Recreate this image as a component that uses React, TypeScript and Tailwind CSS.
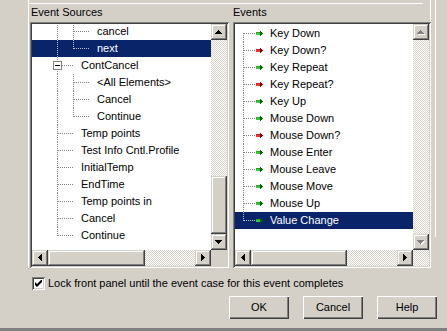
import type { ReactNode } from 'react'

const SUNKEN =
  'shadow-[inset_1px_1px_0_#808080,inset_-1px_-1px_0_#ffffff,inset_2px_2px_0_#404040,inset_-2px_-2px_0_#d4d0c8]'
const RAISED =
  'shadow-[inset_-1px_-1px_0_#404040,inset_1px_1px_0_#d4d0c8,inset_-2px_-2px_0_#808080,inset_2px_2px_0_#ffffff]'
const HATCH = 'bg-[repeating-conic-gradient(#d4d0c8_0%_25%,#ffffff_0%_50%)] bg-size-[2px_2px]'

type Dir = 'up' | 'down' | 'left' | 'right'

const ARROWS: Record<Dir, { w: number; h: number; d: string }> = {
  up: { w: 7, h: 4, d: 'M3 0h1v1h1v1h1v1h1v1H0V3h1V2h1V1h1z' },
  down: { w: 7, h: 4, d: 'M0 0h7v1H6v1H5v1H4v1H3V3H2V2H1V1H0z' },
  left: { w: 4, h: 7, d: 'M3 0h1v7H3V6H2V5H1V4H0V3h1V2h1V1h1z' },
  right: { w: 4, h: 7, d: 'M0 0h1v1h1v1h1v1h1v1H3v1H2v1H1v1H0z' },
}

function ScrollButton({ dir, disabled }: { dir: Dir; disabled?: boolean }) {
  const a = ARROWS[dir]
  return (
    <div className={`w-[16px] h-[16px] shrink-0 bg-[#d4d0c8] flex items-center justify-center ${RAISED}`}>
      <svg width={a.w + 1} height={a.h + 1} shapeRendering="crispEdges" className="block">
        {disabled && <path d={a.d} fill="#ffffff" transform="translate(1 1)" />}
        <path d={a.d} fill={disabled ? '#808080' : '#000000'} />
      </svg>
    </div>
  )
}

// small arrow glyph used in the Events list
function EventArrow({ ok }: { ok: boolean }) {
  const body = ok ? '#2ecc2e' : '#ff2a2a'
  const head = ok ? '#006400' : '#8b0000'
  return (
    <g shapeRendering="crispEdges">
      <rect x={21} y={7} width={4} height={3} fill={body} />
      <rect x={21} y={7} width={4} height={1} fill={head} opacity={0.35} />
      <rect x={25} y={6} width={1} height={5} fill={head} />
      <rect x={26} y={7} width={1} height={3} fill={head} />
      <rect x={27} y={8} width={1} height={1} fill={head} />
    </g>
  )
}

function Dots({ x1, y1, x2, y2, light }: { x1: number; y1: number; x2: number; y2: number; light?: boolean }) {
  return (
    <line
      x1={x1}
      y1={y1}
      x2={x2}
      y2={y2}
      stroke={light ? '#c0c0c0' : '#808080'}
      strokeDasharray="1 1"
      shapeRendering="crispEdges"
    />
  )
}

type SourceKind = 'l2' | 'l2last' | 'parent' | 'l1' | 'l1last'

const sources: { text: string; kind: SourceKind; selected?: boolean }[] = [
  { text: 'cancel', kind: 'l2' },
  { text: 'next', kind: 'l2last', selected: true },
  { text: 'ContCancel', kind: 'parent' },
  { text: '<All Elements>', kind: 'l2' },
  { text: 'Cancel', kind: 'l2' },
  { text: 'Continue', kind: 'l2last' },
  { text: 'Temp points', kind: 'l1' },
  { text: 'Test Info Cntl.Profile', kind: 'l1' },
  { text: 'InitialTemp', kind: 'l1' },
  { text: 'EndTime', kind: 'l1' },
  { text: 'Temp points in', kind: 'l1' },
  { text: 'Cancel', kind: 'l1' },
  { text: 'Continue', kind: 'l1last' },
]

const events: { text: string; ok: boolean; selected?: boolean }[] = [
  { text: 'Key Down', ok: true },
  { text: 'Key Down?', ok: false },
  { text: 'Key Repeat', ok: true },
  { text: 'Key Repeat?', ok: false },
  { text: 'Key Up', ok: true },
  { text: 'Mouse Down', ok: true },
  { text: 'Mouse Down?', ok: false },
  { text: 'Mouse Enter', ok: true },
  { text: 'Mouse Leave', ok: true },
  { text: 'Mouse Move', ok: true },
  { text: 'Mouse Up', ok: true },
  { text: 'Value Change', ok: true, selected: true },
]

function SourceRow({ text, kind, selected }: { text: string; kind: SourceKind; selected?: boolean }) {
  const isL2 = kind === 'l2' || kind === 'l2last'
  const indent = isL2 ? 65 : 49
  return (
    <div className={`flex h-[17px] shrink-0 items-center ${selected ? 'bg-[#0a246a] text-white' : ''}`}>
      <svg width={indent} height={17} className="block shrink-0">
        <Dots x1={25.5} y1={0} x2={25.5} y2={kind === 'l1last' ? 9 : 17} light={selected} />
        {kind === 'l2' && <Dots x1={41.5} y1={0} x2={41.5} y2={17} light={selected} />}
        {kind === 'l2last' && <Dots x1={41.5} y1={0} x2={41.5} y2={9} light={selected} />}
        {isL2 && <Dots x1={42} y1={8.5} x2={57} y2={8.5} light={selected} />}
        {(kind === 'l1' || kind === 'l1last') && <Dots x1={26} y1={8.5} x2={41} y2={8.5} light={selected} />}
        {kind === 'parent' && (
          <g shapeRendering="crispEdges">
            <Dots x1={30} y1={8.5} x2={41} y2={8.5} />
            <rect x={21.5} y={4.5} width={8} height={8} fill="#ffffff" stroke="#808080" />
            <rect x={23} y={8} width={5} height={1} fill="#000000" />
          </g>
        )}
      </svg>
      <span className="whitespace-nowrap leading-[17px]">{text}</span>
    </div>
  )
}

function EventRow({ text, ok, selected, first, last }: { text: string; ok: boolean; selected?: boolean; first?: boolean; last?: boolean }) {
  return (
    <div className={`flex h-[17px] shrink-0 items-center ${selected ? 'bg-[#0a246a] text-white' : ''}`}>
      <svg width={35} height={17} className="block shrink-0">
        <Dots x1={8.5} y1={first ? 8 : 0} x2={8.5} y2={last ? 9 : 17} light={selected} />
        <Dots x1={9} y1={8.5} x2={21} y2={8.5} light={selected} />
        <EventArrow ok={ok} />
      </svg>
      <span className="whitespace-nowrap leading-[17px]">{text}</span>
    </div>
  )
}

function ListBox({
  width,
  children,
  enabled,
  thumbTop,
  thumbH,
  hThumb,
  hatchCorner,
}: {
  width: string
  children: ReactNode
  enabled: boolean
  thumbTop?: number
  thumbH?: number
  hThumb: string
  hatchCorner?: boolean
}) {
  return (
    <div className={`${width} h-[246px] p-[2px] bg-[#d4d0c8] flex flex-col ${SUNKEN}`}>
      <div className="flex h-[226px]">
        <div className="flex-1 bg-white overflow-hidden flex flex-col">{children}</div>
        <div className="w-[16px] flex flex-col">
          <ScrollButton dir="up" disabled={!enabled} />
          {enabled ? (
            <>
              <div className={HATCH} style={{ height: thumbTop }} />
              <div className={`bg-[#d4d0c8] ${RAISED}`} style={{ height: thumbH }} />
              <div className={`flex-1 ${HATCH}`} />
            </>
          ) : (
            <div className={`flex-1 ${HATCH}`} />
          )}
          <ScrollButton dir="down" disabled={!enabled} />
        </div>
      </div>
      <div className="flex h-[16px]">
        <ScrollButton dir="left" />
        <div className={`${hThumb} h-[16px] bg-[#d4d0c8] ${RAISED}`} />
        <div className={`flex-1 ${HATCH}`} />
        <ScrollButton dir="right" />
        <div className={`w-[16px] h-[16px] ${hatchCorner ? HATCH : 'bg-[#d4d0c8]'}`} />
      </div>
    </div>
  )
}

function PushButton({ label }: { label: string }) {
  return (
    <div
      className={`w-[60px] h-[23px] bg-[#d4d0c8] flex items-center justify-center shadow-[inset_1px_1px_0_#ffffff,inset_-1px_-1px_0_#404040,inset_-2px_-2px_0_#808080]`}
    >
      {label}
    </div>
  )
}

export default function App() {
  return (
    <div className="w-[447px] h-[331px] overflow-hidden bg-[#d4d0c8] flex flex-col font-['Liberation_Sans',Arial,sans-serif] text-[11px] leading-[13px] text-black">
      <div className="flex h-[268px] shrink-0">
        <div className="w-[29px] shrink-0 border-r border-white" />
        <div className="w-[402px] shrink-0 flex flex-col">
          <div className="h-[22px] border-r border-white flex flex-col">
            <div className="h-[3px]" />
            <div className="w-[394px] border-t border-white" />
            <div className="flex pt-[2px]">
              <div className="w-[204px] pl-[2px]">Event Sources</div>
              <div>Events</div>
            </div>
          </div>
          <div className="flex pl-[1px] gap-[4px]">
            <ListBox width="w-[199px]" enabled thumbTop={136} thumbH={58} hThumb="w-[97px]">
              <div className="-mt-[1px] flex flex-col">
                {sources.map((s, i) => (
                  <SourceRow key={i} {...s} />
                ))}
              </div>
            </ListBox>
            <ListBox width="w-[198px]" enabled={false} hThumb="w-[96px]" hatchCorner>
              <div className="mt-[1px] flex flex-col">
                {events.map((e, i) => (
                  <EventRow key={i} {...e} first={i === 0} last={i === events.length - 1} />
                ))}
              </div>
            </ListBox>
          </div>
        </div>
        <div className="flex-1 pl-[4px]">
          <div className="w-px h-[237px] bg-white" />
        </div>
      </div>

      <div className="flex items-center gap-[3px] pl-[32px] mt-[9px]">
        <div className={`w-[13px] h-[13px] bg-white flex items-center justify-center ${SUNKEN}`}>
          <svg width={7} height={7} viewBox="0 0 7 7" className="block">
            <polygon points="0,2 2,4 7,-1 7,2 2,7 0,5" fill="#000000" />
          </svg>
        </div>
        <span className="whitespace-nowrap">Lock front panel until the event case for this event completes</span>
      </div>

      <div className="flex gap-[14px] pl-[229px] mt-[6px]">
        <PushButton label="OK" />
        <PushButton label="Cancel" />
        <PushButton label="Help" />
      </div>

      <div className="mt-auto h-[3px] bg-[#808080]" />
    </div>
  )
}
